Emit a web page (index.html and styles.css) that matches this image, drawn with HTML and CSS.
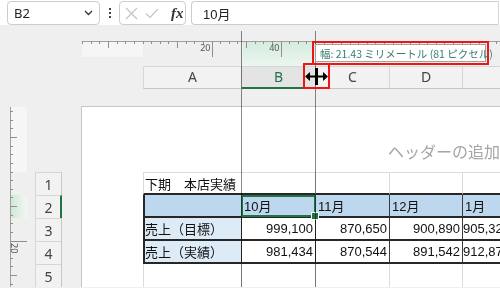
FILE: index.html
```html
<!DOCTYPE html>
<html lang="ja">
<head>
<meta charset="utf-8">
<title>Excel page layout</title>
<link rel="stylesheet" href="styles.css">
</head>
<body>
<div class="fbar">
  <div class="namebox"><span>B2</span>
    <svg class="chev" width="9" height="6" viewBox="0 0 9 6"><path d="M1 1L4.5 4.5L8 1" fill="none" stroke="#333" stroke-width="1.3"/></svg>
  </div>
  <div class="dots"><i></i><i></i><i></i></div>
  <div class="fxbox">
    <svg class="ico" width="13" height="13" viewBox="0 0 13 13"><path d="M1 1L12 12M12 1L1 12" stroke="#c2c2c2" stroke-width="1.1" fill="none"/></svg>
    <svg class="ico" width="14" height="11" viewBox="0 0 14 11"><path d="M1 5.5L5 9.5L13 1" stroke="#c2c2c2" stroke-width="1.1" fill="none"/></svg>
    <span class="fx">fx</span>
  </div>
  <div class="finput">10月</div>
</div>

<div class="sheet">
  <svg class="hruler" width="432" height="41" viewBox="0 0 432 41">
    <defs>
      <linearGradient id="hg" x1="0" y1="0" x2="0" y2="1">
        <stop offset="0" stop-color="#d5ecdf"/>
        <stop offset="1" stop-color="#ebf6ef"/>
      </linearGradient>
    </defs>
    <rect x="1" y="17" width="61" height="15" fill="#f6f6f6"/>
    <rect x="162" y="17" width="73" height="24" fill="url(#hg)"/>
    <path d="M1 16.5H432" stroke="#9f9f9f"/>
    <path stroke="#8f8f8f" fill="none" d="M1.5 16V19M10.5 16V19M18.5 16V19M36.5 16V19M44.5 16V19M53.5 16V19M62.5 16V19M70.5 16V19M79.5 16V19M87.5 16V19M105.5 16V19M113.5 16V19M122.5 16V19M139.5 16V19M148.5 16V19M156.5 16V19M174.5 16V19M182.5 16V19M191.5 16V19M208.5 16V19M217.5 16V19M225.5 16V19M243.5 16V19M251.5 16V19M260.5 16V19M277.5 16V19M286.5 16V19M294.5 16V19M312.5 16V19M320.5 16V19M329.5 16V19M346.5 16V19M355.5 16V19M363.5 16V19M381.5 16V19M389.5 16V19M398.5 16V19M415.5 16V19M27.5 16V23M96.5 16V23M165.5 16V23M234.5 16V23M303.5 16V23M372.5 16V23M131.5 16V32M200.5 16V32M269.5 16V32M338.5 16V32M407.5 16V32"/>
    <text class="rl" x="129.5" y="26" text-anchor="end">20</text>
    <text class="rl" x="198.5" y="26" text-anchor="end">40</text>
  </svg>

  <div class="ch col-a">A</div>
  <div class="ch col-b sel">B</div>
  <div class="ch col-c">C</div>
  <div class="ch col-d">D</div>
  <div class="ch col-e"></div>

  <svg class="vruler" width="35" height="181" viewBox="0 0 35 181">
    <defs>
      <linearGradient id="vg" x1="0" y1="0" x2="1" y2="0">
        <stop offset="0" stop-color="#cfe8d8"/>
        <stop offset="1" stop-color="#f1f7f3"/>
      </linearGradient>
    </defs>
    <rect x="11" y="1" width="16" height="65" fill="#f6f6f6"/>
    <rect x="11" y="89" width="16" height="23" fill="url(#vg)"/>
    <path d="M10.5 1V181" stroke="#9f9f9f"/>
    <path stroke="#8f8f8f" fill="none" d="M10 5.5H13M10 14.5H13M10 22.5H13M10 40.5H13M10 48.5H13M10 57.5H13M10 66.5H13M10 74.5H13M10 83.5H13M10 91.5H13M10 109.5H13M10 117.5H13M10 126.5H13M10 143.5H13M10 152.5H13M10 160.5H13M10 178.5H13M10 31.5H17M10 100.5H17M10 169.5H17M10 135.5H27"/>
    <text class="rl" transform="translate(11 137) rotate(90)">20</text>
  </svg>

  <div class="page">
    <div class="page-head"><span class="add-header">ヘッダーの追加</span></div>
  </div>

  <div class="rh row-1">1</div>
  <div class="rh row-2 sel">2</div>
  <div class="rh row-3">3</div>
  <div class="rh row-4">4</div>
  <div class="rh row-5">5</div>

  <div class="cell g1 col-ab row-1 first">下期　本店実績</div>
  <div class="cell g1 col-c row-1"></div>
  <div class="cell g1 col-d row-1"></div>
  <div class="cell g1 col-e row-1"></div>

  <div class="cell t hd col-a row-2 first"></div>
  <div class="cell t hd col-b row-2 active">10月</div>
  <div class="cell t hd col-c row-2">11月</div>
  <div class="cell t hd col-d row-2">12月</div>
  <div class="cell t hd col-e row-2">1月</div>

  <div class="cell t lb col-a row-3 first">売上（目標）</div>
  <div class="cell t num col-b row-3">999,100</div>
  <div class="cell t num col-c row-3">870,650</div>
  <div class="cell t num col-d row-3">900,890</div>
  <div class="cell t num col-e row-3">905,320</div>

  <div class="cell t lb col-a row-4 first">売上（実績）</div>
  <div class="cell t num col-b row-4">981,434</div>
  <div class="cell t num col-c row-4">870,544</div>
  <div class="cell t num col-d row-4">891,542</div>
  <div class="cell t num col-e row-4">912,870</div>

  <div class="cell g5 col-a row-5 first"></div>
  <div class="cell g5 col-b row-5"></div>
  <div class="cell g5 col-c row-5"></div>
  <div class="cell g5 col-d row-5"></div>
  <div class="cell g5 col-e row-5"></div>

  <div class="dragline dl-left"></div>
  <div class="dragline dl-right"></div>

  <div class="mark tip-mark"><div class="tip">幅: 21.43 ミリメートル (81 ピクセル)</div></div>
  <div class="mark cur-mark">
    <svg width="23" height="17" viewBox="0 0 23 17">
      <path d="M10 0H13V17H10Z" fill="#000"/>
      <path d="M3 7.5H20V9.5H3Z" fill="#000"/>
      <path d="M0 8.5L5 4V13Z" fill="#000"/>
      <path d="M23 8.5L18 4V13Z" fill="#000"/>
    </svg>
  </div>
</div>
</body>
</html>
```

FILE: styles.css
```css
* { box-sizing: border-box; }

body {
  margin: 0;
  width: 500px;
  height: 288px;
  overflow: hidden;
  background: #efefef;
  font-family: "Noto Sans", "Noto Sans CJK JP", sans-serif;
  color: #222;
}

/* formula bar */
.fbar {
  height: 25px;
  display: flex;
  align-items: flex-start;
  background: #fff;
}
.namebox {
  margin: 1px 0 0 7px;
  width: 93px;
  height: 24px;
  border: 1px solid #cdcdcd;
  border-radius: 4px;
  display: flex;
  align-items: center;
  justify-content: space-between;
  padding: 0 6px 0 6px;
  font-size: 13px;
  color: #222;
  background: #fff;
}
.chev { display: block; }
.dots {
  width: 19px;
  height: 25px;
  display: flex;
  flex-direction: column;
  align-items: center;
  justify-content: center;
  gap: 2px;
}
.dots i {
  display: block;
  width: 2px;
  height: 2px;
  background: #444;
}
.fxbox {
  margin-top: 1px;
  width: 67px;
  height: 24px;
  border: 1px solid #cdcdcd;
  border-radius: 4px;
  display: flex;
  align-items: center;
  padding-left: 5px;
  gap: 7px;
  background: #fff;
}
.ico { display: block; }
.fx {
  margin-left: 5px;
  font-family: "Liberation Serif", serif;
  font-style: italic;
  font-weight: bold;
  font-size: 15px;
  color: #333;
  line-height: 1;
}
.finput {
  margin: 1px 1px 0 5px;
  flex: 1;
  height: 24px;
  border: 1px solid #cdcdcd;
  border-radius: 4px 0 0 4px;
  border-right-color: #d6d6d6;
  display: flex;
  align-items: center;
  padding-left: 11px;
  font-family: "Liberation Sans", "Noto Sans CJK JP", sans-serif;
  font-size: 13px;
  color: #222;
  background: #fff;
}

/* sheet grid */
.sheet {
  position: relative;
  display: grid;
  grid-template-columns: 35px 27px 19px 62px 99px 74px 74px 73px 50px;
  grid-template-rows: 41px 23px 17px 66px repeat(5, 23px);
}

.col-a { grid-column: 5; }
.col-b { grid-column: 6; }
.col-c { grid-column: 7; }
.col-d { grid-column: 8; }
.col-e { grid-column: 9; }
.col-ab { grid-column: 5 / 7; }
.row-1 { grid-row: 5; }
.row-2 { grid-row: 6; }
.row-3 { grid-row: 7; }
.row-4 { grid-row: 8; }
.row-5 { grid-row: 9; }

.hruler {
  grid-column: 4 / -1;
  grid-row: 1;
  display: block;
}
.vruler {
  grid-column: 1;
  grid-row: 4 / -1;
  display: block;
}
.rl {
  font-family: "Noto Sans", sans-serif;
  font-size: 9px;
  fill: #555;
}

/* column headers */
.ch {
  grid-row: 2;
  background: #f2f2f2;
  border-top: 1px solid #d6d6d6;
  border-right: 1px solid #d6d6d6;
  border-bottom: 1px solid #c6c6c6;
  display: flex;
  align-items: center;
  justify-content: center;
  padding-bottom: 2px;
  font-size: 14px;
  color: #444;
}
.ch.col-a { border-left: 1px solid #d6d6d6; }
.ch.sel {
  background: #e4e4e4;
  color: #217346;
  border-bottom: 2px solid #217346;
}

/* row headers */
.rh {
  grid-column: 2;
  background: #f2f2f2;
  border-top: 1px solid #d6d6d6;
  border-left: 1px solid #d6d6d6;
  border-right: 1px solid #c6c6c6;
  display: flex;
  align-items: center;
  justify-content: center;
  font-size: 14px;
  color: #444;
}
.rh.sel {
  border-right: 2px solid #217346;
  padding-left: 1px;
}

/* page */
.page {
  grid-column: 4 / -1;
  grid-row: 4 / -1;
  background: #fff;
  border-top: 1px solid #c6c6c6;
  border-left: 1px solid #c6c6c6;
}
.page-head {
  height: 65px;
  display: flex;
  align-items: flex-end;
  padding: 0 0 11px 306px;
}
.add-header {
  font-family: "Noto Sans CJK JP", sans-serif;
  font-size: 16px;
  line-height: 20px;
  color: #a5a5a5;
  white-space: nowrap;
}

/* cells */
.cell {
  display: flex;
  align-items: center;
  padding: 0 2px;
  white-space: nowrap;
  font-family: "Liberation Sans", "Noto Sans CJK JP", sans-serif;
  font-size: 13px;
  color: #111;
}
.g1 {
  border-top: 1px solid #dcdcdc;
  border-right: 1px solid #dcdcdc;
  border-bottom: 2px solid #262626;
}
.g1.first {
  border-left: 1px solid #dcdcdc;
  padding-left: 1px;
}
.t {
  border-right: 1px solid #3c3c3c;
  border-bottom: 2px solid #262626;
  background: #fff;
}
.t.first {
  border-left: 2px solid #262626;
  padding-left: 0;
}
.hd { background: #bdd7ee; }
.lb { background: #ddebf7; }
.num { justify-content: flex-end; }
.g5 { border-right: 1px solid #dcdcdc; }
.g5.first { border-left: 1px solid #dcdcdc; }

.active { position: relative; }
.active::after {
  content: "";
  position: absolute;
  left: -1px;
  top: 0;
  right: -1px;
  bottom: -1px;
  border: 2px solid #217346;
}
.active::before {
  content: "";
  position: absolute;
  right: -4px;
  bottom: -4px;
  width: 6px;
  height: 6px;
  background: #217346;
  border: 1px solid #fff;
  z-index: 2;
}

/* drag guide lines */
.dragline {
  position: absolute;
  top: 6px;
  bottom: 0;
  width: 1px;
  background: #8a8a8a;
  mix-blend-mode: multiply;
  z-index: 3;
}
.dl-left { left: 241px; }
.dl-right { left: 315px; }

/* red annotation marks */
.mark {
  position: absolute;
  border: 2px solid #f01414;
  z-index: 4;
}
.tip-mark {
  left: 312px;
  top: 16px;
  width: 177px;
  height: 24px;
  padding: 1px;
}
.tip {
  height: 100%;
  background: #fff;
  border: 1px solid #a0a0a0;
  display: flex;
  align-items: center;
  padding-left: 4px;
  font-family: "Noto Sans CJK JP", sans-serif;
  font-size: 10.5px;
  color: #3a7d70;
  white-space: nowrap;
}
.cur-mark {
  left: 303px;
  top: 38px;
  width: 27px;
  height: 26px;
  display: flex;
  align-items: center;
  justify-content: center;
}
.cur-mark svg { display: block; }
```
